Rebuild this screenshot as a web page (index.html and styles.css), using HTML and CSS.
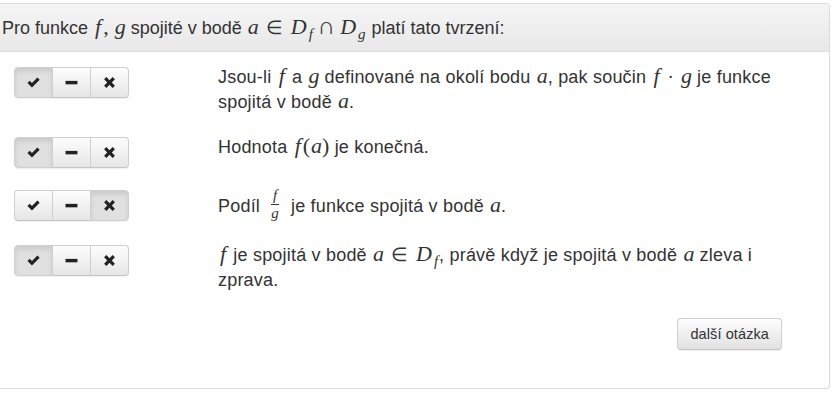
FILE: index.html
```html
<!DOCTYPE html>
<html lang="cs">
<head>
<meta charset="utf-8">
<title>Spojitost</title>
<link rel="stylesheet" href="styles.css">
</head>
<body>
<div class="panel">
  <div class="panel-heading">Pro funkce <span class="mi f">f</span><span class="mo comma">,</span><span class="mi">g</span> spojité v bodě <span class="mi">a</span><span class="mo rel">∈</span><span class="mi">D</span><sub class="mi sub">f</sub><span class="mo bin cap">∩</span><span class="mi">D</span><sub class="mi sub">g</sub> platí tato tvrzení:</div>
  <div class="panel-body">
    <div class="stmt">
      <div class="col-btns">
        <div class="btn-group">
          <button class="btn active"><svg viewBox="0 0 12 12"><path d="M0.4 6.4 L2.5 4.3 L4.6 6.4 L9.6 1.4 L11.7 3.5 L4.6 10.6 Z"/></svg></button>
          <button class="btn"><svg viewBox="0 0 12 12"><rect x="0.5" y="4.5" width="11" height="3.2"/></svg></button>
          <button class="btn"><svg viewBox="0 0 12 12"><path d="M1 3.1 L3.1 1 L6 3.9 L8.9 1 L11 3.1 L8.1 6 L11 8.9 L8.9 11 L6 8.1 L3.1 11 L1 8.9 L3.9 6 Z"/></svg></button>
        </div>
      </div>
      <div class="stmt-text">Jsou-li <span class="mi f">f</span> a <span class="mi">g</span> definované na okolí bodu <span class="mi">a</span>, pak součin <span class="mi f">f</span><span class="mo bin">·</span><span class="mi">g</span> je funkce spojitá v bodě <span class="mi">a</span>.</div>
    </div>
    <div class="stmt">
      <div class="col-btns">
        <div class="btn-group">
          <button class="btn active"><svg viewBox="0 0 12 12"><path d="M0.4 6.4 L2.5 4.3 L4.6 6.4 L9.6 1.4 L11.7 3.5 L4.6 10.6 Z"/></svg></button>
          <button class="btn"><svg viewBox="0 0 12 12"><rect x="0.5" y="4.5" width="11" height="3.2"/></svg></button>
          <button class="btn"><svg viewBox="0 0 12 12"><path d="M1 3.1 L3.1 1 L6 3.9 L8.9 1 L11 3.1 L8.1 6 L11 8.9 L8.9 11 L6 8.1 L3.1 11 L1 8.9 L3.9 6 Z"/></svg></button>
        </div>
      </div>
      <div class="stmt-text">Hodnota <span class="mi f">f</span><span class="mo">(</span><span class="mi">a</span><span class="mo">)</span> je konečná.</div>
    </div>
    <div class="stmt">
      <div class="col-btns">
        <div class="btn-group">
          <button class="btn"><svg viewBox="0 0 12 12"><path d="M0.4 6.4 L2.5 4.3 L4.6 6.4 L9.6 1.4 L11.7 3.5 L4.6 10.6 Z"/></svg></button>
          <button class="btn"><svg viewBox="0 0 12 12"><rect x="0.5" y="4.5" width="11" height="3.2"/></svg></button>
          <button class="btn active"><svg viewBox="0 0 12 12"><path d="M1 3.1 L3.1 1 L6 3.9 L8.9 1 L11 3.1 L8.1 6 L11 8.9 L8.9 11 L6 8.1 L3.1 11 L1 8.9 L3.9 6 Z"/></svg></button>
        </div>
      </div>
      <div class="stmt-text frac-line">Podíl <span class="frac"><span class="num mi">f</span><span class="den mi">g</span></span> je funkce spojitá v bodě <span class="mi">a</span>.</div>
    </div>
    <div class="stmt">
      <div class="col-btns">
        <div class="btn-group">
          <button class="btn active"><svg viewBox="0 0 12 12"><path d="M0.4 6.4 L2.5 4.3 L4.6 6.4 L9.6 1.4 L11.7 3.5 L4.6 10.6 Z"/></svg></button>
          <button class="btn"><svg viewBox="0 0 12 12"><rect x="0.5" y="4.5" width="11" height="3.2"/></svg></button>
          <button class="btn"><svg viewBox="0 0 12 12"><path d="M1 3.1 L3.1 1 L6 3.9 L8.9 1 L11 3.1 L8.1 6 L11 8.9 L8.9 11 L6 8.1 L3.1 11 L1 8.9 L3.9 6 Z"/></svg></button>
        </div>
      </div>
      <div class="stmt-text"><span class="mi f">f</span> je spojitá v bodě <span class="mi">a</span><span class="mo rel">∈</span><span class="mi">D</span><sub class="mi sub">f</sub>, právě když je spojitá v bodě <span class="mi">a</span> zleva i zprava.</div>
    </div>
    <div class="footer">
      <button class="btn-next">další otázka</button>
    </div>
  </div>
</div>
</body>
</html>
```

FILE: styles.css
```css
html, body {
  margin: 0;
  padding: 0;
  background: #fff;
}
body {
  font-family: "Liberation Sans", Arial, sans-serif;
  font-size: 18px;
  letter-spacing: 0.2px;
  line-height: 25px;
  color: #333;
}
.panel {
  margin: 3px 4px 0 -16px;
  border: 1px solid #dcdcdc;
  border-radius: 4px;
  box-shadow: 0 1px 2px rgba(0,0,0,0.05);
  background: #fff;
}
.panel-heading {
  padding: 10px 16px 10px 17px;
  line-height: 26px;
  background: linear-gradient(to bottom, #f5f5f5 0%, #e8e8e8 100%);
  border-bottom: 1px solid #dcdcdc;
  border-radius: 3px 3px 0 0;
  letter-spacing: 0;
}
.mi {
  font-family: "Liberation Serif", "Times New Roman", serif;
  font-style: italic;
  font-size: 22px;
  line-height: 1;
  letter-spacing: 0;
  padding-left: 1px;
}
.f {
  padding-left: 2px;
  padding-right: 2px;
}
.mo {
  font-family: "Liberation Serif", "Times New Roman", serif;
  font-size: 22px;
  line-height: 1;
  letter-spacing: 0;
}
.rel {
  font-size: 19px;
  margin: 0 7px;
}
.bin {
  font-size: 19px;
  margin: 0 6px;
}
.cap {
  font-size: 24px;
  margin: 0 4px;
}
.comma {
  margin-right: 5px;
}
.sub {
  font-size: 15px;
  vertical-align: -5px;
  line-height: 0;
  margin-left: 1px;
  margin-right: 1px;
}
.panel-body {
  padding: 13px 15px 38px 29px;
}
.stmt {
  display: flex;
  align-items: flex-start;
  margin-bottom: 20px;
}
.col-btns {
  width: 204px;
  flex: none;
  padding-top: 2px;
}
.btn-group {
  display: inline-flex;
  border-radius: 4px;
  box-shadow: 0 1px 1px rgba(0,0,0,0.06);
}
.btn {
  width: 39px;
  height: 31px;
  margin: 0;
  margin-left: -1px;
  padding: 0;
  display: flex;
  align-items: center;
  justify-content: center;
  border: 1px solid #cfcfcf;
  border-bottom-color: #c4c4c4;
  background: linear-gradient(to bottom, #fdfdfd 0%, #e6e6e6 100%);
}
.btn:first-child {
  margin-left: 0;
  border-radius: 4px 0 0 4px;
}
.btn:last-child {
  border-radius: 0 4px 4px 0;
}
.btn.active {
  background: #e0e0e0;
  border-color: #d0d0d0;
  box-shadow: inset 0 3px 5px rgba(0,0,0,0.1);
}
.btn svg {
  width: 13px;
  height: 13px;
  fill: #222;
}
.stmt-text {
  flex: 1;
}
.frac-line {
  padding-top: 3px;
  padding-bottom: 0;
}
.frac {
  display: inline-flex;
  flex-direction: column;
  align-items: center;
  vertical-align: middle;
  margin: 0 5px 0 4px;
  line-height: 14px;
  position: relative;
  top: -3px;
}
.frac .num, .frac .den {
  font-size: 15px;
  line-height: 14px;
  padding: 0 2px;
}
.frac .num {
  border-bottom: 1px solid #333;
  padding-bottom: 2px;
}
.frac .den {
  padding-top: 1px;
}
.footer {
  display: flex;
  justify-content: flex-end;
  padding-right: 32px;
  margin-top: 25px;
}
.btn-next {
  font-family: "Liberation Sans", Arial, sans-serif;
  font-size: 14.5px;
  letter-spacing: 0.1px;
  line-height: 20px;
  color: #333;
  padding: 5px 12px;
  border: 1px solid #cfcfcf;
  border-bottom-color: #c2c2c2;
  border-radius: 4px;
  background: linear-gradient(to bottom, #fdfdfd 0%, #e2e2e2 100%);
  box-shadow: 0 1px 1px rgba(0,0,0,0.06);
}
```
